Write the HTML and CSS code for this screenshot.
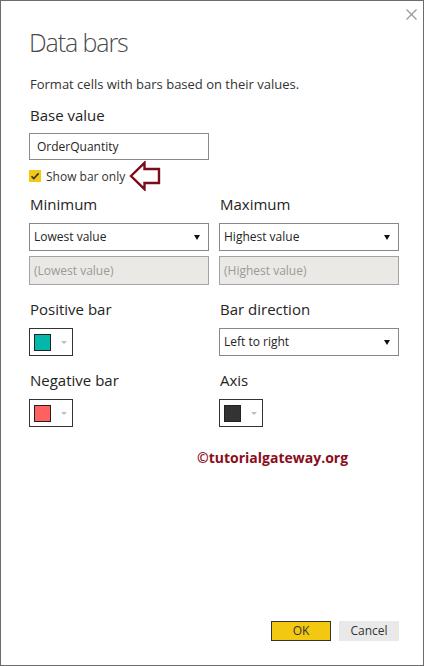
FILE: index.html
```html
<!DOCTYPE html>
<html>
<head>
<meta charset="utf-8">
<link rel="stylesheet" href="styles.css">
</head>
<body>
<div class="dialog">
  <button class="close" aria-label="Close">
    <svg width="11" height="11" viewBox="0 0 11 11"><path d="M0.5 0.5 L10.5 10.5 M10.5 0.5 L0.5 10.5" stroke="#9a9a9a" stroke-width="1.3" fill="none"/></svg>
  </button>
  <h1 class="title">Data bars</h1>
  <p class="desc">Format cells with bars based on their values.</p>
  <div class="label base-label">Base value</div>
  <div class="textbox">OrderQuantity</div>
  <div class="check-row">
    <span class="checkbox">
      <svg width="12" height="12" viewBox="0 0 12 12"><path d="M2.5 6.2 L4.8 8.6 L9.6 3.4" stroke="#333" stroke-width="1.6" fill="none"/></svg>
    </span>
    <span class="check-text">Show bar only</span>
    <svg class="pointer" width="32" height="30" viewBox="0 0 32 30"><path d="M2 15 L15.5 1.8 L15.5 8 L30 8 L30 22 L15.5 22 L15.5 28.2 Z" stroke="#7b0c1c" stroke-width="2.4" fill="none" stroke-linejoin="miter"/></svg>
  </div>
  <div class="grid">
    <div class="field">
      <div class="label">Minimum</div>
      <div class="select">Lowest value<span class="caret"></span></div>
      <div class="disabled">(Lowest value)</div>
    </div>
    <div class="field">
      <div class="label">Maximum</div>
      <div class="select">Highest value<span class="caret"></span></div>
      <div class="disabled">(Highest value)</div>
    </div>
    <div class="field">
      <div class="label">Positive bar</div>
      <div class="swatch-box"><span class="swatch teal"></span><span class="mini-caret"></span></div>
    </div>
    <div class="field">
      <div class="label">Bar direction</div>
      <div class="select">Left to right<span class="caret"></span></div>
    </div>
    <div class="field">
      <div class="label">Negative bar</div>
      <div class="swatch-box"><span class="swatch red"></span><span class="mini-caret"></span></div>
    </div>
    <div class="field">
      <div class="label">Axis</div>
      <div class="swatch-box"><span class="swatch dark"></span><span class="mini-caret"></span></div>
    </div>
  </div>
  <div class="watermark">©tutorialgateway.org</div>
  <div class="footer">
    <button class="btn ok">OK</button>
    <button class="btn cancel">Cancel</button>
  </div>
</div>
</body>
</html>
```

FILE: styles.css
```css
* { box-sizing: border-box; }
html, body { margin: 0; padding: 0; background: #fff; }
body { font-family: "Open Sans", "Noto Sans", sans-serif; color: #252423; }

.dialog {
  position: relative;
  width: 424px;
  height: 666px;
  border: 1px solid #6c6c6c;
  padding: 0 24px 24px 28px;
  display: flex;
  flex-direction: column;
}

.close {
  position: absolute;
  top: 7px;
  right: 5px;
  width: 13px;
  height: 13px;
  padding: 1px;
  border: 0;
  background: none;
  display: flex;
}

.title {
  margin: 24px 0 0 0;
  font-size: 25px;
  font-weight: 300;
  line-height: 34px;
  color: #4a4a4a;
  letter-spacing: -1.1px;
}

.desc {
  margin: 16px 0 0 1px;
  font-size: 13px;
  line-height: 18px;
  color: #333;
}

.label {
  font-size: 15px;
  line-height: 20px;
  color: #252423;
  padding-left: 1px;
}
.base-label { margin-top: 12px; }

.textbox {
  margin-top: 8px;
  width: 180px;
  height: 27px;
  border: 1px solid #8a8a8a;
  font-size: 12px;
  line-height: 25px;
  padding-left: 7px;
  color: #252423;
}

.check-row {
  display: flex;
  align-items: center;
  height: 30px;
  margin-top: 1px;
  padding-left: 0;
}
.checkbox {
  width: 12px;
  height: 12px;
  background: #f2c811;
  display: flex;
}
.check-text {
  font-size: 12px;
  margin-left: 5px;
  color: #333;
}
.pointer { margin-left: 4px; }

.grid {
  display: grid;
  grid-template-columns: 180px 180px;
  column-gap: 10px;
  row-gap: 14px;
  margin-top: 3px;
}
.field {
  display: flex;
  flex-direction: column;
}
.field .label { margin-bottom: 9px; }

.select {
  position: relative;
  height: 28px;
  border: 1px solid #888;
  font-size: 12px;
  line-height: 26px;
  padding-left: 4px;
  color: #252423;
}
.caret {
  position: absolute;
  right: 8px;
  top: 11px;
  width: 0;
  height: 0;
  border-left: 3px solid transparent;
  border-right: 3px solid transparent;
  border-top: 5px solid #111;
}

.disabled {
  margin-top: 5px;
  height: 29px;
  border: 1px solid #a3a3a3;
  background: #eae9e5;
  font-size: 12px;
  line-height: 27px;
  padding-left: 4px;
  color: #9a9a9a;
}

.swatch-box {
  width: 44px;
  height: 28px;
  border: 1px solid #333;
  display: flex;
  align-items: center;
  padding-left: 4px;
}
.swatch {
  width: 17px;
  height: 17px;
  border: 1px solid #222;
}
.teal { background: #01b8aa; }
.red { background: #fd625e; }
.dark { background: #333; }
.mini-caret {
  margin-left: 10px;
  width: 0;
  height: 0;
  border-left: 3px solid transparent;
  border-right: 3px solid transparent;
  border-top: 3px solid #bdbdbd;
}

.watermark {
  margin-top: 21px;
  padding-left: 168px;
  font-size: 14px;
  font-weight: 700;
  color: #8b0d20;
}

.footer {
  margin-top: auto;
  display: flex;
  justify-content: flex-end;
  gap: 8px;
}
.btn {
  width: 60px;
  height: 20px;
  font-family: "Open Sans", "Noto Sans", sans-serif;
  font-size: 12px;
  color: #333;
  padding: 0;
  line-height: 18px;
}
.ok { background: #f2c811; border: 1px solid #333; }
.cancel { background: #e9e9e9; border: 1px solid #e9e9e9; }
```
